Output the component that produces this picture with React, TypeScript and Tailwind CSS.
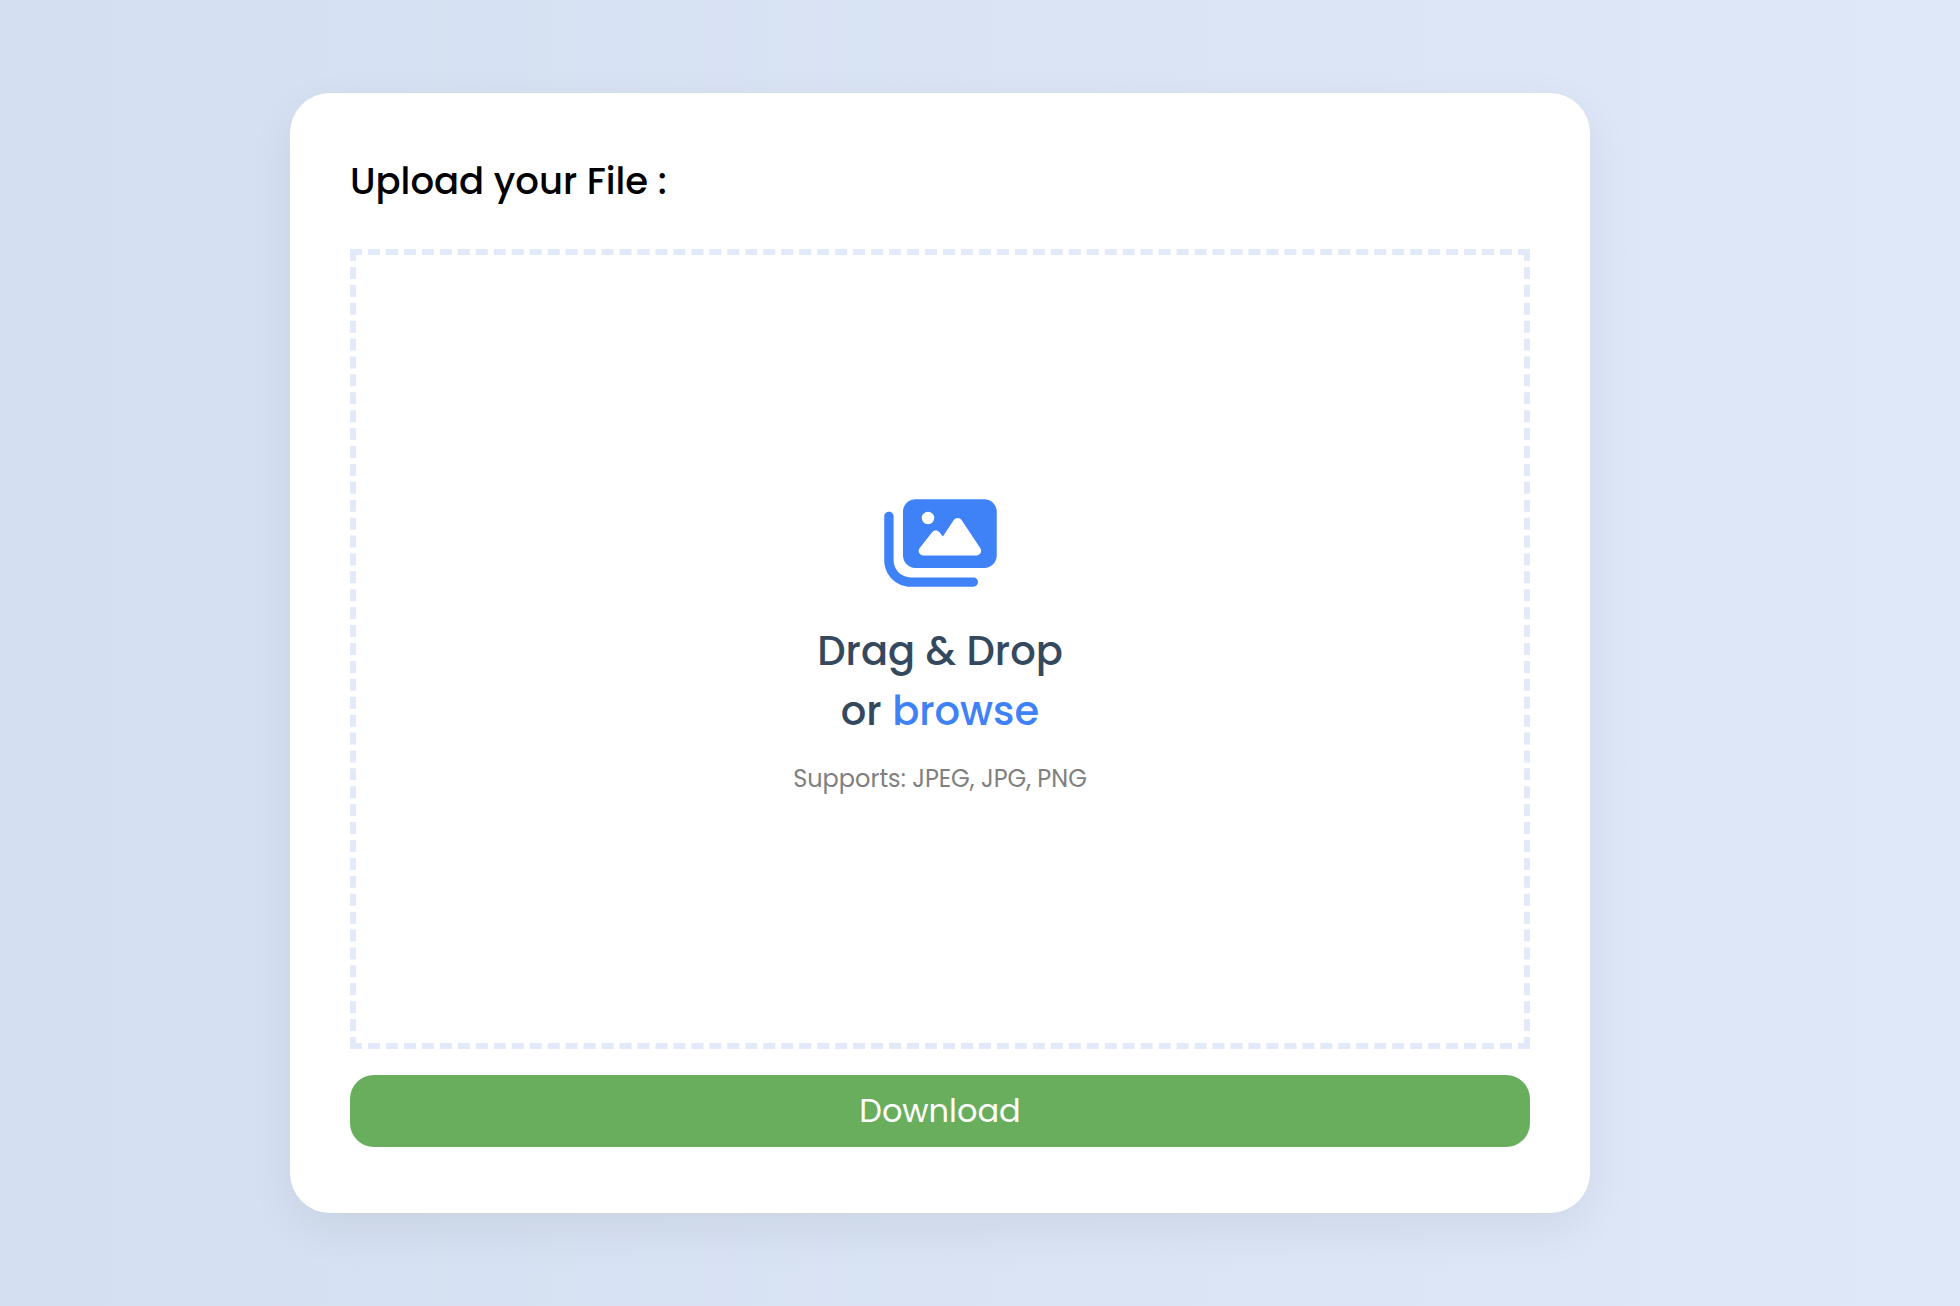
import { ChangeEvent, DragEvent, useRef, useState } from 'react'
import { FaImages } from 'react-icons/fa6'

export default function App() {
  const inputRef = useRef<HTMLInputElement>(null)
  const [file, setFile] = useState<File | null>(null)

  function handleChange(e: ChangeEvent<HTMLInputElement>) {
    setFile(e.target.files?.[0] ?? null)
  }

  function handleDrop(e: DragEvent<HTMLDivElement>) {
    e.preventDefault()
    setFile(e.dataTransfer.files[0] ?? null)
  }

  function download() {
    if (!file) return
    const link = document.createElement('a')
    link.href = URL.createObjectURL(file)
    link.download = file.name
    link.click()
    URL.revokeObjectURL(link.href)
  }

  return (
    <main className="flex min-h-screen items-center justify-center bg-linear-to-r from-[#d4dff1] to-[#dfe8f9] pr-20 font-[Poppins,Inter,sans-serif]">
      <section className="w-full max-w-[1300px] rounded-[40px] bg-white px-15 pt-12 pb-[66px] shadow-[0_16px_48px_rgba(0,0,0,0.065)]">
        <h1 className="text-[37px] leading-20 font-medium text-black">Upload your File :</h1>

        {/* Drop area */}
        <div
          className="mt-7 flex h-[800px] flex-col items-center justify-center border-6 border-dashed border-[#e2e9f9] pb-2"
          onDragOver={e => e.preventDefault()}
          onDrop={handleDrop}>
          <FaImages className="h-[100px] w-[113px] text-[#3f82f8]" />
          <p className="mt-7 text-[40px] leading-15 font-medium text-[#34495e]">Drag &amp; Drop</p>
          <p className="text-[40px] leading-15 font-medium text-[#34495e]">
            or{' '}
            <button
              type="button"
              className="cursor-pointer text-[#3f82f8]"
              onClick={() => inputRef.current?.click()}>
              browse
            </button>
          </p>
          <input
            ref={inputRef}
            type="file"
            aria-label="Upload your File"
            accept="image/jpeg,image/png"
            className="hidden"
            onChange={handleChange}
          />
          <p className="mt-5 text-2xl leading-9 text-[#808080]">Supports: JPEG, JPG, PNG</p>
        </div>

        <button
          type="button"
          onClick={download}
          className="mt-[26px] h-18 w-full cursor-pointer rounded-3xl bg-[#69ae5c] text-[32px] text-white">
          Download
        </button>
      </section>
    </main>
  )
}
